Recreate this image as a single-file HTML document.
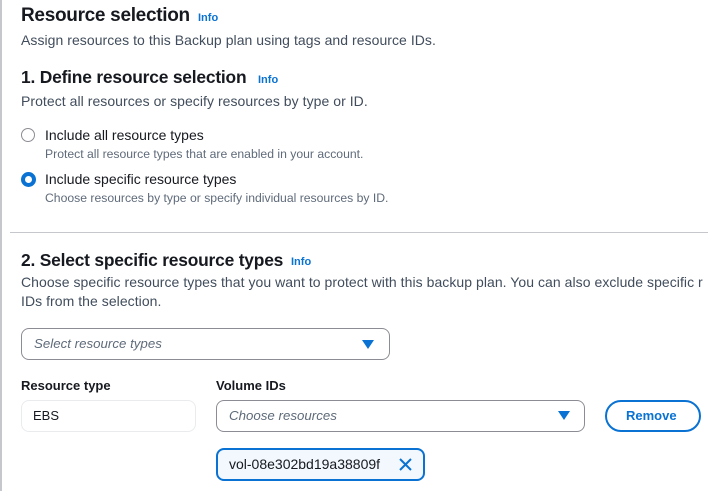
<!DOCTYPE html>
<html><head><style>
body{margin:0;width:708px;height:491px;overflow:hidden;background:#fff;font-family:"Liberation Sans",sans-serif;color:#16191f;position:relative}
.a{position:absolute;white-space:nowrap}
.h1{font-size:19px;font-weight:bold;letter-spacing:-0.3px}
.h2{font-size:17.4px;font-weight:bold;letter-spacing:-0.2px}
.info{font-size:11px;font-weight:bold;color:#0972d3}
.p{font-size:14px;color:#414d5c;letter-spacing:0.05px}
.s{font-size:12.2px;color:#5f6b7a}
.lab{font-size:13px;font-weight:bold}
.box{position:absolute;border:1px solid #8c8c94;border-radius:8px;box-sizing:border-box}
.ph{font-size:13.3px;font-style:italic;color:#5f6b7a}
.tri{position:absolute;width:0;height:0;border-left:6px solid transparent;border-right:6px solid transparent;border-top:9px solid #0972d3}
</style></head><body>
<div style="position:absolute;left:0;top:0;width:2px;height:491px;background:#c6c6cd"></div>
<div class="a h1" style="left:21px;top:5px">Resource selection</div>
<div class="a info" style="left:198px;top:12px">Info</div>
<div class="a p" style="left:21px;top:32px">Assign resources to this Backup plan using tags and resource IDs.</div>
<div class="a h2" style="left:21px;top:67px">1. Define resource selection</div>
<div class="a info" style="left:258px;top:74px">Info</div>
<div class="a p" style="left:21px;top:93px">Protect all resources or specify resources by type or ID.</div>
<div style="position:absolute;left:21px;top:128px;width:12px;height:12px;border:1.5px solid #8c8c94;border-radius:50%"></div>
<div class="a" style="left:45px;top:127px;font-size:14px">Include all resource types</div>
<div class="a s" style="left:45px;top:147px">Protect all resource types that are enabled in your account.</div>
<div style="position:absolute;left:21px;top:172px;width:7px;height:7px;border:4px solid #0972d3;border-radius:50%;background:#fff"></div>
<div class="a" style="left:45px;top:171px;font-size:14px">Include specific resource types</div>
<div class="a s" style="left:45px;top:191px">Choose resources by type or specify individual resources by ID.</div>
<div style="position:absolute;left:10px;top:232px;width:698px;height:1px;background:#c6c6cd"></div>
<div class="a h2" style="left:21px;top:250px">2. Select specific resource types</div>
<div class="a info" style="left:291px;top:256px">Info</div>
<div class="a p" style="left:21px;top:274px">Choose specific resource types that you want to protect with this backup plan. You can also exclude specific r</div>
<div class="a p" style="left:21px;top:293px">IDs from the selection.</div>
<div class="box" style="left:21px;top:328px;width:369px;height:32px"></div>
<div class="a ph" style="left:34px;top:336px">Select resource types</div>
<div class="tri" style="left:362px;top:340px"></div>
<div class="a lab" style="left:21px;top:378px">Resource type</div>
<div class="a lab" style="left:216px;top:378px">Volume IDs</div>
<div class="box" style="left:21px;top:400px;width:175px;height:32px;border-color:#e9ebed"></div>
<div class="a" style="left:33px;top:408px;font-size:13px">EBS</div>
<div class="box" style="left:216px;top:400px;width:369px;height:32px"></div>
<div class="a ph" style="left:229px;top:408px">Choose resources</div>
<div class="tri" style="left:558px;top:411px"></div>
<div class="box" style="left:605px;top:400px;width:96px;height:32px;border:2px solid #0972d3;border-radius:16px"></div>
<div class="a" style="left:626px;top:408px;font-size:13px;font-weight:bold;color:#0972d3">Remove</div>
<div class="box" style="left:216px;top:448px;width:209px;height:33px;border:2px solid #0972d3;background:#f2f8fd"></div>
<div class="a" style="left:229px;top:456px;font-size:14px">vol-08e302bd19a38809f</div>
<svg class="a" style="left:399px;top:458px" width="13" height="13" viewBox="0 0 13 13"><path d="M1 1L12 12M12 1L1 12" stroke="#0972d3" stroke-width="2"/></svg>
</body></html>
